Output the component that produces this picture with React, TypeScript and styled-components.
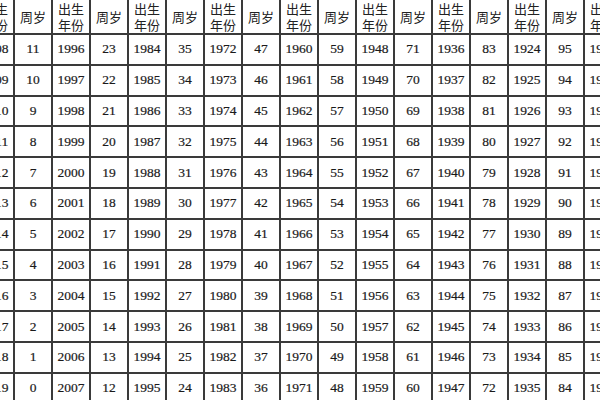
import { Fragment } from "react"
import styled, { createGlobalStyle } from "styled-components"

const GlobalStyle = createGlobalStyle`
  html, body {
    margin: 0;
    padding: 0;
    background: #fff;
  }
`

// first birth year shown in each column pair, ages counted for 2019
const blocks = [2008, 1996, 1984, 1972, 1960, 1948, 1936, 1924, 1912]
const ROWS = 12

export default function App() {
  return (
    <>
      <GlobalStyle />
      <Frame>
        <Table>
          <colgroup>
            {blocks.map((b) => (
              <Fragment key={b}>
                <col />
                <col />
              </Fragment>
            ))}
          </colgroup>
          <thead>
            <HeadRow>
              {blocks.map((b) => (
                <Fragment key={b}>
                  <HeadCell>
                    <HeadLine>出生</HeadLine>
                    <HeadLine>年份</HeadLine>
                  </HeadCell>
                  <HeadCell>周岁</HeadCell>
                </Fragment>
              ))}
            </HeadRow>
          </thead>
          <tbody>
            {Array.from({ length: ROWS }, (_, i) => (
              <Row key={i}>
                {blocks.map((b) => (
                  <Fragment key={b}>
                    <Cell>{b + i}</Cell>
                    <Cell>{2019 - b - i}</Cell>
                  </Fragment>
                ))}
              </Row>
            ))}
          </tbody>
        </Table>
      </Frame>
    </>
  )
}

const Frame = styled.div`
  width: 600px;
  height: 400px;
  overflow: hidden;
  background: #fff;
`

const Table = styled.table`
  border-collapse: collapse;
  table-layout: fixed;
  width: ${17 * 38}px;
  margin: -4px 0 0 -25px;
  font-family: "Liberation Serif", "Noto Sans CJK SC", serif;
  color: #1a1a1a;

  col {
    width: 38px;
  }
`

const HeadRow = styled.tr`
  height: 37px;
`

const Row = styled.tr`
  height: 30.8px;
`

const HeadCell = styled.th`
  border: 2px solid #3a3a3a;
  padding: 2px 0 0;
  font-family: "Noto Sans CJK SC", sans-serif;
  font-weight: 400;
  font-size: 13px;
  line-height: 15.5px;
  text-align: center;
  vertical-align: middle;
  color: #222;
`

const HeadLine = styled.div`
  height: 15.5px;
  overflow: visible;
`

const Cell = styled.td`
  border: 2px solid #3a3a3a;
  padding: 0;
  font-size: 13.5px;
  text-align: center;
  vertical-align: middle;
  -webkit-text-stroke: 0.2px #1a1a1a;
`
